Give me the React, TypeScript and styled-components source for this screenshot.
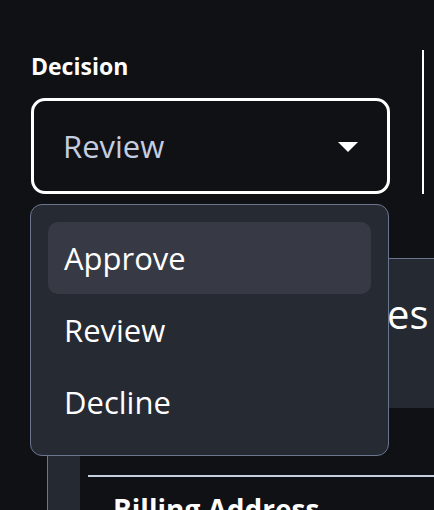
import { useState } from "react";
import styled, { createGlobalStyle } from "styled-components";

const options = ["Approve", "Review", "Decline"];

const App = () => {
    const [value] = useState("Review");
    const [hovered, setHovered] = useState("Approve");

    return (
        <>
            <GlobalStyle />
            <Page>
                <TopRow>
                    <Field>
                        <Label>Decision</Label>
                        <SelectWrap>
                            <SelectBox>
                                <SelectValue>{value}</SelectValue>
                                <Caret viewBox="0 0 20 10" aria-hidden="true">
                                    <path d="M0 0 L20 0 L10 10 Z" fill="#ffffff" />
                                </Caret>
                            </SelectBox>
                            <Menu role="listbox">
                                {options.map((opt) => (
                                    <MenuItem
                                        key={opt}
                                        $active={hovered === opt}
                                        onMouseEnter={() => setHovered(opt)}
                                    >
                                        {opt}
                                    </MenuItem>
                                ))}
                            </Menu>
                        </SelectWrap>
                    </Field>
                    <Divider />
                </TopRow>

                <Card>
                    <CardHeader>
                        <CardTitle>Vendor Invoices</CardTitle>
                    </CardHeader>
                    <CardBody>
                        <Inner>
                            <SectionRow>
                                <SectionTitle>IT Architecture</SectionTitle>
                            </SectionRow>
                            <SectionRow $plain>
                                <SectionTitle>Billing Address</SectionTitle>
                            </SectionRow>
                        </Inner>
                    </CardBody>
                </Card>
            </Page>
        </>
    );
};

export default App;

const GlobalStyle = createGlobalStyle`
  html, body {
    margin: 0;
    padding: 0;
    background: #101115;
    overflow: hidden;
    font-family: "Open Sans", "Noto Sans", sans-serif;
  }
`;

const Page = styled.div`
  width: 434px;
  height: 510px;
  overflow: hidden;
  padding: 50px 0 0 31px;
  box-sizing: border-box;
`;

const TopRow = styled.div`
  display: flex;
  align-items: flex-start;
  gap: 32px;
`;

const Field = styled.div`
  width: 359px;
  flex-shrink: 0;
`;

const Label = styled.div`
  font-size: 23px;
  font-weight: 700;
  color: #ffffff;
  line-height: 32px;
  margin-bottom: 16px;
`;

const SelectWrap = styled.div`
  position: relative;
`;

const SelectBox = styled.div`
  height: 96px;
  box-sizing: border-box;
  border: 3px solid #ffffff;
  border-radius: 14px;
  display: flex;
  align-items: center;
  justify-content: space-between;
  padding: 0 29px 0 29px;
  cursor: pointer;
`;

const SelectValue = styled.span`
  font-size: 31px;
  color: #c5cde0;
`;

const Caret = styled.svg`
  width: 20px;
  height: 10px;
  margin-top: 2px;
`;

const Menu = styled.div`
  position: absolute;
  top: 106px;
  left: -1px;
  width: 359px;
  height: 252px;
  box-sizing: border-box;
  background: #262a33;
  border: 1px solid #6b7590;
  border-radius: 12px;
  padding: 17px 17px;
  display: flex;
  flex-direction: column;
  z-index: 10;
`;

const MenuItem = styled.div<{ $active?: boolean }>`
  height: 72px;
  display: flex;
  align-items: center;
  padding: 0 16px;
  border-radius: 10px;
  font-size: 31px;
  color: #ffffff;
  background: ${(p) => (p.$active ? "#373a44" : "transparent")};
  cursor: pointer;
`;

const Divider = styled.div`
  width: 2px;
  height: 144px;
  background: #ffffff;
  flex-shrink: 0;
`;

const Card = styled.div`
  margin: 64px 0 0 16px;
  width: 600px;
  border-top: 1px solid #6b7590;
  border-left: 1px solid #6b7590;
  background: #252932;
`;

const CardHeader = styled.div`
  height: 149px;
  box-sizing: border-box;
  padding: 28px 0 0 84px;
`;

const CardTitle = styled.h2`
  margin: 0;
  font-size: 40px;
  font-weight: 400;
  line-height: 54px;
  color: #ffffff;
  white-space: nowrap;
`;

const CardBody = styled.div`
  padding-left: 32px;
`;

const Inner = styled.div`
  background: #101115;
  padding: 18px 0 40px 8px;
`;

const SectionRow = styled.div<{ $plain?: boolean }>`
  padding: 0 0 11px 25px;
  border-bottom: ${(p) => (p.$plain ? "none" : "2px solid #c6cfe0")};
  margin-bottom: ${(p) => (p.$plain ? "0" : "13px")};
`;

const SectionTitle = styled.div`
  font-size: 28px;
  font-weight: 700;
  color: #ffffff;
  line-height: 38px;
`;
